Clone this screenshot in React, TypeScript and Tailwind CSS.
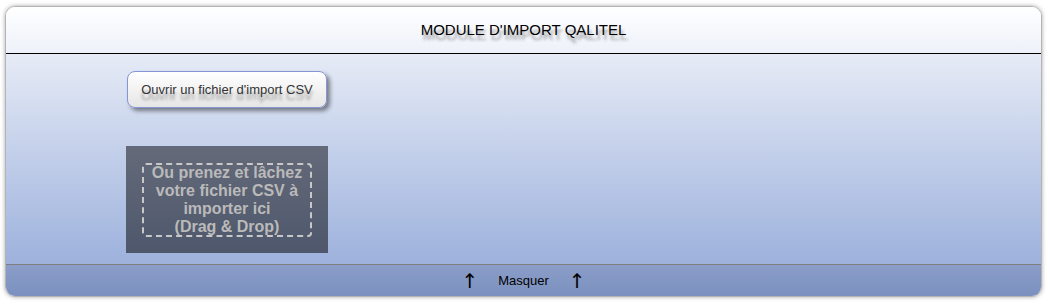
export default function App() {
  return (
    <div className="w-[1050px] h-[306px] bg-white pt-[6px] pl-[5px] font-['Liberation_Sans',Arial,sans-serif]">
      <div className="w-[1037px] h-[291px] rounded-[10px] border border-[#b4b4b4] shadow-[0_0_4px_rgba(0,0,0,0.35)] overflow-hidden flex flex-col">
        <div className="h-[47px] shrink-0 bg-gradient-to-b from-white to-[#edf1f9] border-b border-black flex items-center justify-center">
          <span className="text-[15px] text-black [text-shadow:2px_5px_3px_rgba(80,80,80,0.55)]">
            MODULE D'IMPORT QALITEL
          </span>
        </div>
        <div className="flex-1 bg-gradient-to-b from-[#e6ebf6] to-[#9db1dc] pl-[121px] pt-[17px] flex flex-col items-start">
          <button className="w-[200px] h-[37px] rounded-[8px] border border-[#8595d6] bg-gradient-to-b from-white to-[#e6e6e6] shadow-[3px_3px_4px_rgba(0,0,0,0.45)] text-[13px] text-[#333] [text-shadow:0_6px_3px_rgba(90,90,90,0.55)]">
            Ouvrir un fichier d'import CSV
          </button>
          <div className="mt-[38px] ml-[-1px] w-[202px] h-[107px] bg-gradient-to-b from-[#646a79] to-[#4e576c] px-[16px] pt-[17px]">
            <div className="h-[74px] border-2 border-dashed border-[#c8c8c8] rounded-[4px] flex items-center justify-center text-center font-bold text-[16px] leading-[18px] text-[#bababa]">
              Ou prenez et lâchez
              <br />
              votre fichier CSV à
              <br />
              importer ici
              <br />
              (Drag &amp; Drop)
            </div>
          </div>
        </div>
        <div className="h-[32px] shrink-0 border-t border-[#7f7f7f] bg-gradient-to-b from-[#8b9ec8] to-[#7b90bf] flex items-center justify-center text-[13px] text-black">
          <span className="text-[20px] leading-none font-['DejaVu_Sans',sans-serif] mr-[20px]">↑</span>
          <span>Masquer</span>
          <span className="text-[20px] leading-none font-['DejaVu_Sans',sans-serif] ml-[20px]">↑</span>
        </div>
      </div>
    </div>
  );
}
